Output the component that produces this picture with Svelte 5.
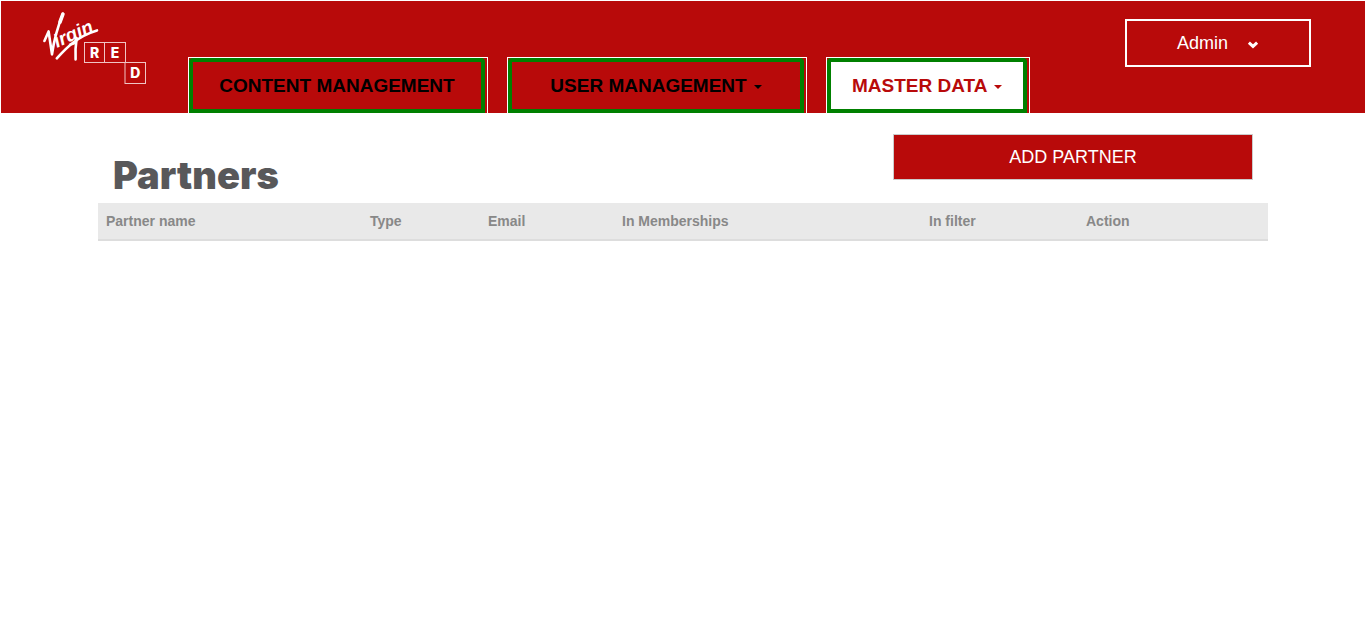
<script>
  const tabs = [
    { label: 'CONTENT MANAGEMENT', caret: false, active: false },
    { label: 'USER MANAGEMENT', caret: true, active: false },
    { label: 'MASTER DATA', caret: true, active: true }
  ];

  const columns = [
    { title: 'Partner name', share: 264 },
    { title: 'Type', share: 118 },
    { title: 'Email', share: 134 },
    { title: 'In Memberships', share: 307 },
    { title: 'In filter', share: 157 },
    { title: 'Action', share: 190 }
  ];
  const total = columns.reduce((sum, column) => sum + column.share, 0);
</script>

<div class="page">
  <header>
    <a class="logo" href="#home" aria-label="Virgin Red">
      <svg width="106" height="74" viewBox="42 11 106 74" role="img" aria-hidden="true">
        <!-- opening flourish -->
        <path class="flourish" d="M44.4 41 48.6 31.4 52 54.4C53.8 41 57.6 27 63 13.8" />
        <path class="tip" d="M60 22 62.9 14.2" />
        <text class="script" transform="translate(57 48) rotate(-24)">irgin</text>
        <!-- descender and underline -->
        <path class="flourish" d="M76.6 38C75.6 45 75.2 52 75.6 59.4" />
        <path class="flourish" d="M56.8 58.4C67 47 78 36 97 30.4" />
        <g class="boxes">
          <rect x="84.5" y="42.5" width="20" height="20" />
          <rect x="104.5" y="42.5" width="21" height="20" />
          <rect x="125" y="62.5" width="20.5" height="21" />
        </g>
        <g class="initials">
          <text x="94.7" y="58">R</text>
          <text x="115" y="58">E</text>
          <text x="135.2" y="78">D</text>
        </g>
      </svg>
    </a>

    <nav aria-label="Main">
      {#each tabs as tab}
        <div class="tab" class:narrow={tab.active}>
          <a href="#section" class:active={tab.active} aria-current={tab.active ? 'page' : undefined}>
            {tab.label}{#if tab.caret}<span class="caret"></span>{/if}
          </a>
        </div>
      {/each}
    </nav>

    <button class="account" type="button">
      Admin
      <svg width="12" height="8" viewBox="0 0 12 8" aria-hidden="true">
        <path d="M1.9 1.6 6 5.4 10.1 1.6" />
      </svg>
    </button>
  </header>

  <main>
    <div class="title-row">
      <h1>Partners</h1>
      <button class="add" type="button">ADD PARTNER</button>
    </div>
    <table>
      <thead>
        <tr>
          {#each columns as column}
            <th scope="col" style:width="{(column.share / total) * 100}%">{column.title}</th>
          {/each}
        </tr>
      </thead>
    </table>
  </main>
</div>

<style>
  :global(body) {
    background: #fff;
    font-family: "Liberation Sans", Arial, sans-serif;
  }

  .page,
  .page * {
    box-sizing: border-box;
  }

  .page {
    padding: 1px 1px 0;
  }

  header {
    display: flex;
    align-items: flex-start;
    height: 112px;
    padding: 0 54px 0 41px;
    background: #b80a0a;
  }

  .logo {
    display: block;
    flex: none;
    margin-top: 10px;
  }

  .logo svg {
    display: block;
  }

  .flourish,
  .tip {
    fill: none;
    stroke: #fff;
    stroke-width: 2.6;
    stroke-linecap: round;
    stroke-linejoin: round;
  }

  .tip {
    stroke-width: 3.6;
  }

  .script {
    fill: #fff;
    font: italic bold 19px "Liberation Sans Narrow", "Liberation Sans", sans-serif;
  }

  .boxes {
    fill: none;
    stroke: #f0c4c4;
    stroke-width: 1;
  }

  .initials {
    fill: #fff;
    font: 800 14px Inter, sans-serif;
    text-anchor: middle;
  }

  nav {
    display: flex;
    gap: 19px;
    align-self: flex-end;
    margin-left: 40px;
  }

  .tab {
    width: 300px;
    border: 1px solid #fff;
    border-bottom: 0;
  }

  .tab.narrow {
    width: auto;
  }

  .tab a {
    display: flex;
    align-items: center;
    justify-content: center;
    height: 55px;
    margin-right: 2px;
    padding: 0 21px;
    border: 4px solid #008000;
    border-radius: 4px 4px 0 0;
    color: #000;
    font-size: 19px;
    font-weight: 700;
    line-height: 26px;
    text-decoration: none;
    white-space: nowrap;
  }

  .tab a.active {
    background: #fff;
    color: #b80a0a;
  }

  .caret {
    margin: 2px 0 0 7px;
    border-top: 4px solid currentColor;
    border-right: 4px solid transparent;
    border-left: 4px solid transparent;
  }

  .account {
    display: flex;
    flex: none;
    align-items: center;
    justify-content: center;
    gap: 19px;
    width: 186px;
    height: 48px;
    margin: 18px 0 0 auto;
    padding: 0;
    border: 2px solid #fff;
    background: transparent;
    color: #fff;
    font: 18px "Liberation Sans", Arial, sans-serif;
  }

  .account svg {
    margin-top: 3px;
    fill: none;
    stroke: #fff;
    stroke-width: 3;
  }

  main {
    max-width: 1170px;
    margin: 0 auto;
    padding-top: 21px;
  }

  .title-row {
    display: flex;
    justify-content: space-between;
    align-items: flex-start;
    padding: 0 15px;
  }

  h1 {
    margin: 21px 0 7px;
    color: #58585a;
    font: 900 38px/41px "Arial Black", Inter, sans-serif;
  }

  .add {
    width: 360px;
    height: 46px;
    padding: 0;
    border: 1px solid #ccc;
    background: #b80a0a;
    color: #fff;
    font: 18px "Liberation Sans", Arial, sans-serif;
  }

  table {
    width: 100%;
    border-collapse: collapse;
    table-layout: fixed;
  }

  th {
    padding: 8px;
    border-bottom: 2px solid #ddd;
    background: #e9e9e9;
    color: #888;
    font-size: 14px;
    line-height: 20px;
    text-align: left;
  }
</style>
